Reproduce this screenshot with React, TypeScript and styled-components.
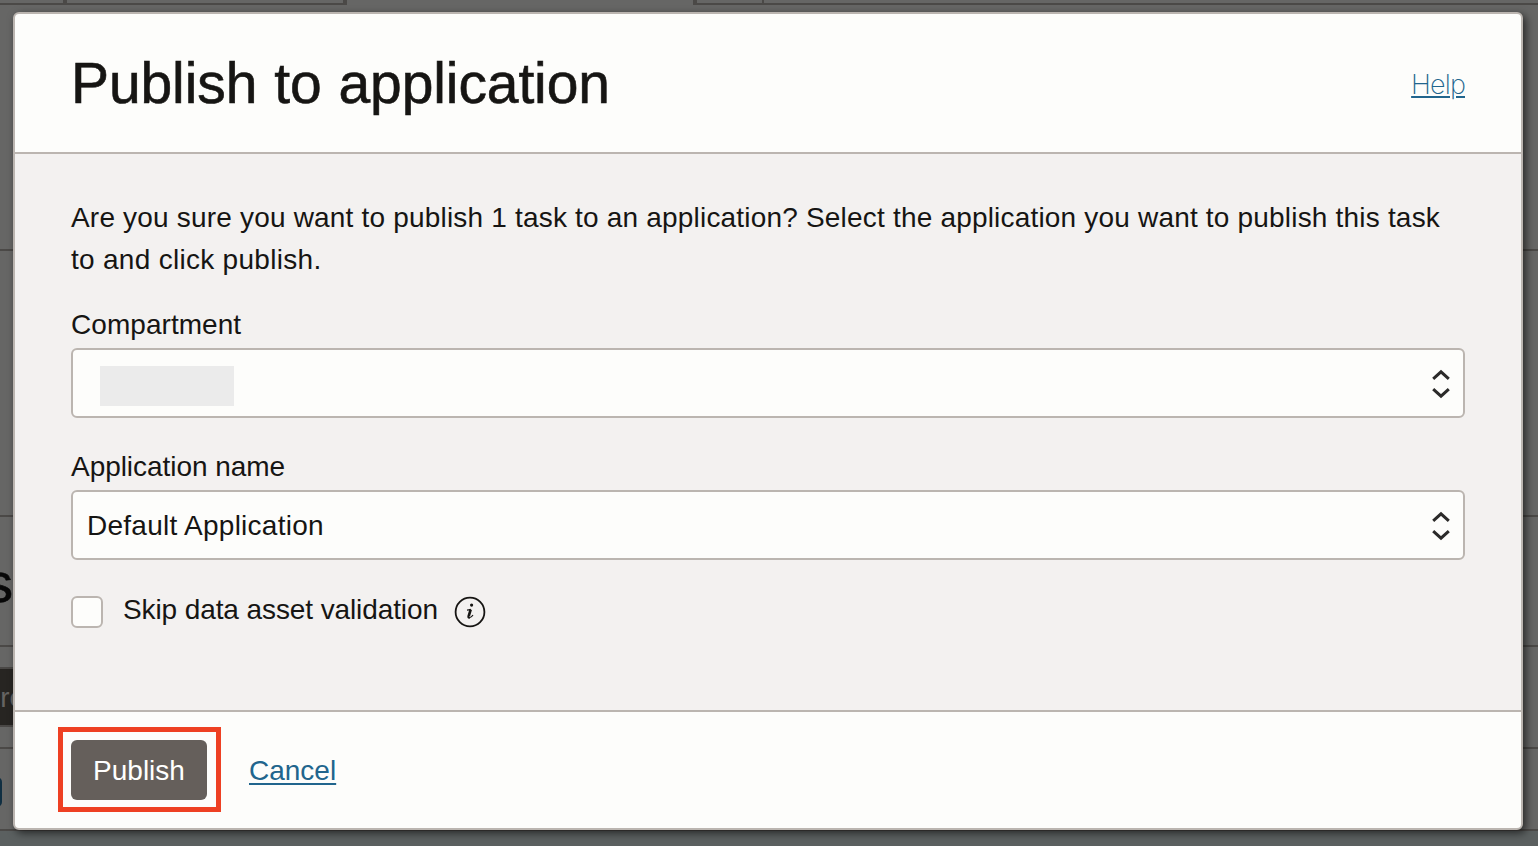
import React from "react";
import styled, { createGlobalStyle } from "styled-components";

const line = "#bbb5b0";
const rule = "#4b4947";
const ink = "#161513";
const paper = "#fdfdfb";

const GlobalStyle = createGlobalStyle`
  *, *::before, *::after { box-sizing: border-box; }
  html, body, #root { height: 100%; }
  body {
    margin: 0;
    overflow: hidden;
    background: #666665;
    color: ${ink};
    font: 28px/42px "Liberation Sans", Arial, sans-serif;
  }
`;

const Screen = styled.div`
  position: relative;
  height: 846px;
  overflow: hidden;
`;

const Page = styled.div`
  display: flex;
  flex-direction: column;
  height: 100%;
  background: #666665;
`;

const TabStrip = styled.div`
  display: flex;
  height: 5px;
  flex: none;
`;

const Tab = styled.div<{ $width?: number; $left?: number; $right?: number; $active?: boolean }>`
  flex: ${(p) => (p.$width ? `0 0 ${p.$width}px` : "1")};
  border: 0 solid ${rule};
  border-bottom-width: ${(p) => (p.$active ? 0 : 2)}px;
  border-left-width: ${(p) => p.$left ?? 0}px;
  border-right-width: ${(p) => p.$right ?? 0}px;
`;

const Section = styled.div<{ $height: number }>`
  display: flex;
  flex: none;
  align-items: center;
  height: ${(p) => p.$height}px;
  border-bottom: 2px solid ${rule};
`;

const PageHeading = styled.div`
  margin: 3px 0 0 -15px;
  font-size: 56px;
  line-height: 60px;
  color: #080808;
  -webkit-text-stroke: 0.6px #080808;
`;

const CreateButton = styled.div`
  display: flex;
  align-items: center;
  width: 160px;
  height: 60px;
  margin: 0 0 1px -38px;
  padding: 2px 0 0 16px;
  border: 2px solid #4a4846;
  background: #272522;
  color: #666462;
`;

const Chip = styled.div`
  width: 30px;
  height: 30px;
  margin: 5px 0 0 -28px;
  border-radius: 5px;
  background: #102f42;
`;

const PageFooter = styled.div`
  flex: 1;
  background: #5b6060;
`;

const Dialog = styled.section`
  position: absolute;
  top: 12px;
  left: 13px;
  display: flex;
  flex-direction: column;
  width: 1510px;
  height: 818px;
  border: 2px solid ${line};
  border-radius: 6px;
  background: ${paper};
  box-shadow: 3px 3px 8px rgba(0, 0, 0, 0.6);
`;

const Header = styled.header`
  display: flex;
  align-items: center;
  justify-content: space-between;
  height: 140px;
  padding: 0 56px;
  border-bottom: 2px solid ${line};
`;

const Title = styled.h1`
  margin: 0 0 1px;
  font-size: 57px;
  font-weight: 400;
  line-height: 70px;
  letter-spacing: -0.1px;
  word-spacing: 1.2px;
  white-space: nowrap;
  -webkit-text-stroke: 0.6px ${ink};
`;

const HelpLink = styled.a`
  margin-top: 4px;
  font-family: Inter, "Liberation Sans", sans-serif;
  font-size: 27px;
  font-weight: 250;
  letter-spacing: -0.9px;
  color: #21658d;
  text-decoration: underline;
  text-decoration-thickness: 2px;
  text-underline-offset: 2px;
`;

const Body = styled.main`
  height: 558px;
  padding: 43px 56px 0;
  border-bottom: 2px solid ${line};
  background: #f3f1f0;
`;

const Text = styled.div<{ $spacing?: number }>`
  letter-spacing: ${(p) => p.$spacing ?? 0}px;
  white-space: nowrap;
`;

const Field = styled.div<{ $top: number }>`
  margin-top: ${(p) => p.$top}px;
`;

const Select = styled.div`
  display: flex;
  align-items: center;
  justify-content: space-between;
  height: 70px;
  margin-top: 2px;
  padding: 2px 13px 0 14px;
  border: 2px solid ${line};
  border-radius: 6px;
  background: ${paper};
`;

const Redacted = styled.div`
  width: 134px;
  height: 40px;
  margin: 3px 0 0 13px;
  background: #ebebeb;
`;

const CheckRow = styled.div`
  display: flex;
  align-items: center;
  height: 32px;
  margin-top: 36px;
`;

const CheckLabel = styled.label`
  margin-bottom: 4px;
  letter-spacing: -0.1px;
  white-space: nowrap;
`;

const Checkbox = styled.div`
  width: 32px;
  height: 32px;
  margin-right: 20px;
  border: 2px solid ${line};
  border-radius: 6px;
  background: ${paper};
`;

const InfoIcon = styled.svg`
  margin-left: 16px;
`;

const Footer = styled.footer`
  display: flex;
  align-items: center;
  height: 116px;
  padding-left: 43px;
`;

const Highlight = styled.div`
  display: flex;
  width: 163px;
  height: 85px;
  margin-top: -2px;
  padding: 8px;
  border: 5px solid #ee4023;
`;

const PublishButton = styled.div`
  display: flex;
  align-items: center;
  justify-content: center;
  width: 136px;
  height: 60px;
  padding-top: 2px;
  border-radius: 6px;
  background: #655f5b;
  color: #fff;
`;

const CancelLink = styled.a`
  margin: 2px 0 0 28px;
  color: #21658d;
  text-decoration: underline;
  text-decoration-thickness: 2px;
  text-underline-offset: 3px;
`;

const Chevrons = () => (
  <svg width="18" height="30" viewBox="0 0 18 30" fill="none" stroke="#2b2a29" strokeWidth="3">
    <path d="M1.200 9.900 9 2.800l7.800 7.100M1.200 20.100 9 27.200l7.800-7.100" />
  </svg>
);

export default function App() {
  return (
    <Screen>
      <GlobalStyle />
      <Page>
        <TabStrip>
          <Tab $width={67} $right={4} />
          <Tab $width={280} $right={4} />
          <Tab $width={346} $active />
          <Tab $width={71} $left={4} $right={2} />
          <Tab />
        </TabStrip>
        <Section $height={246} />
        <Section $height={266} />
        <Section $height={130}>
          <PageHeading>s</PageHeading>
        </Section>
        <Section $height={102}>
          <CreateButton>Create</CreateButton>
        </Section>
        <Section $height={82}>
          <Chip />
        </Section>
        <PageFooter />
      </Page>
      <Dialog>
        <Header>
          <Title>Publish to application</Title>
          <HelpLink>Help</HelpLink>
        </Header>
        <Body>
          <Text $spacing={0.19}>
            Are you sure you want to publish 1 task to an application? Select the application you want to publish this task
          </Text>
          <Text $spacing={0.29}>to and click publish.</Text>
          <Field $top={23}>
            <Text $spacing={0.05}>Compartment</Text>
            <Select>
              <Redacted />
              <Chevrons />
            </Select>
          </Field>
          <Field $top={28}>
            <Text $spacing={-0.05}>Application name</Text>
            <Select>
              <Text $spacing={0.26}>Default Application</Text>
              <Chevrons />
            </Select>
          </Field>
          <CheckRow>
            <Checkbox />
            <CheckLabel>Skip data asset validation</CheckLabel>
            <InfoIcon width="32" height="32" viewBox="0 0 32 32" fill="none" stroke={ink}>
              <circle cx="16" cy="16" r="14.400" strokeWidth="1.800" />
              <circle cx="17.600" cy="9.100" r="1.600" fill={ink} stroke="none" />
              <path d="M13 14.200c1.300-.1 2.500-.4 3.800-.8" strokeWidth="1.200" />
              <path d="M16.700 13.500l-2 6.600c-.3 1.200.1 1.500.8 1.300" strokeWidth="2.600" />
              <path d="M15 21.600c1.500.3 2.900-.9 4-2.600" strokeWidth="1.200" />
            </InfoIcon>
          </CheckRow>
        </Body>
        <Footer>
          <Highlight>
            <PublishButton>Publish</PublishButton>
          </Highlight>
          <CancelLink>Cancel</CancelLink>
        </Footer>
      </Dialog>
    </Screen>
  );
}
